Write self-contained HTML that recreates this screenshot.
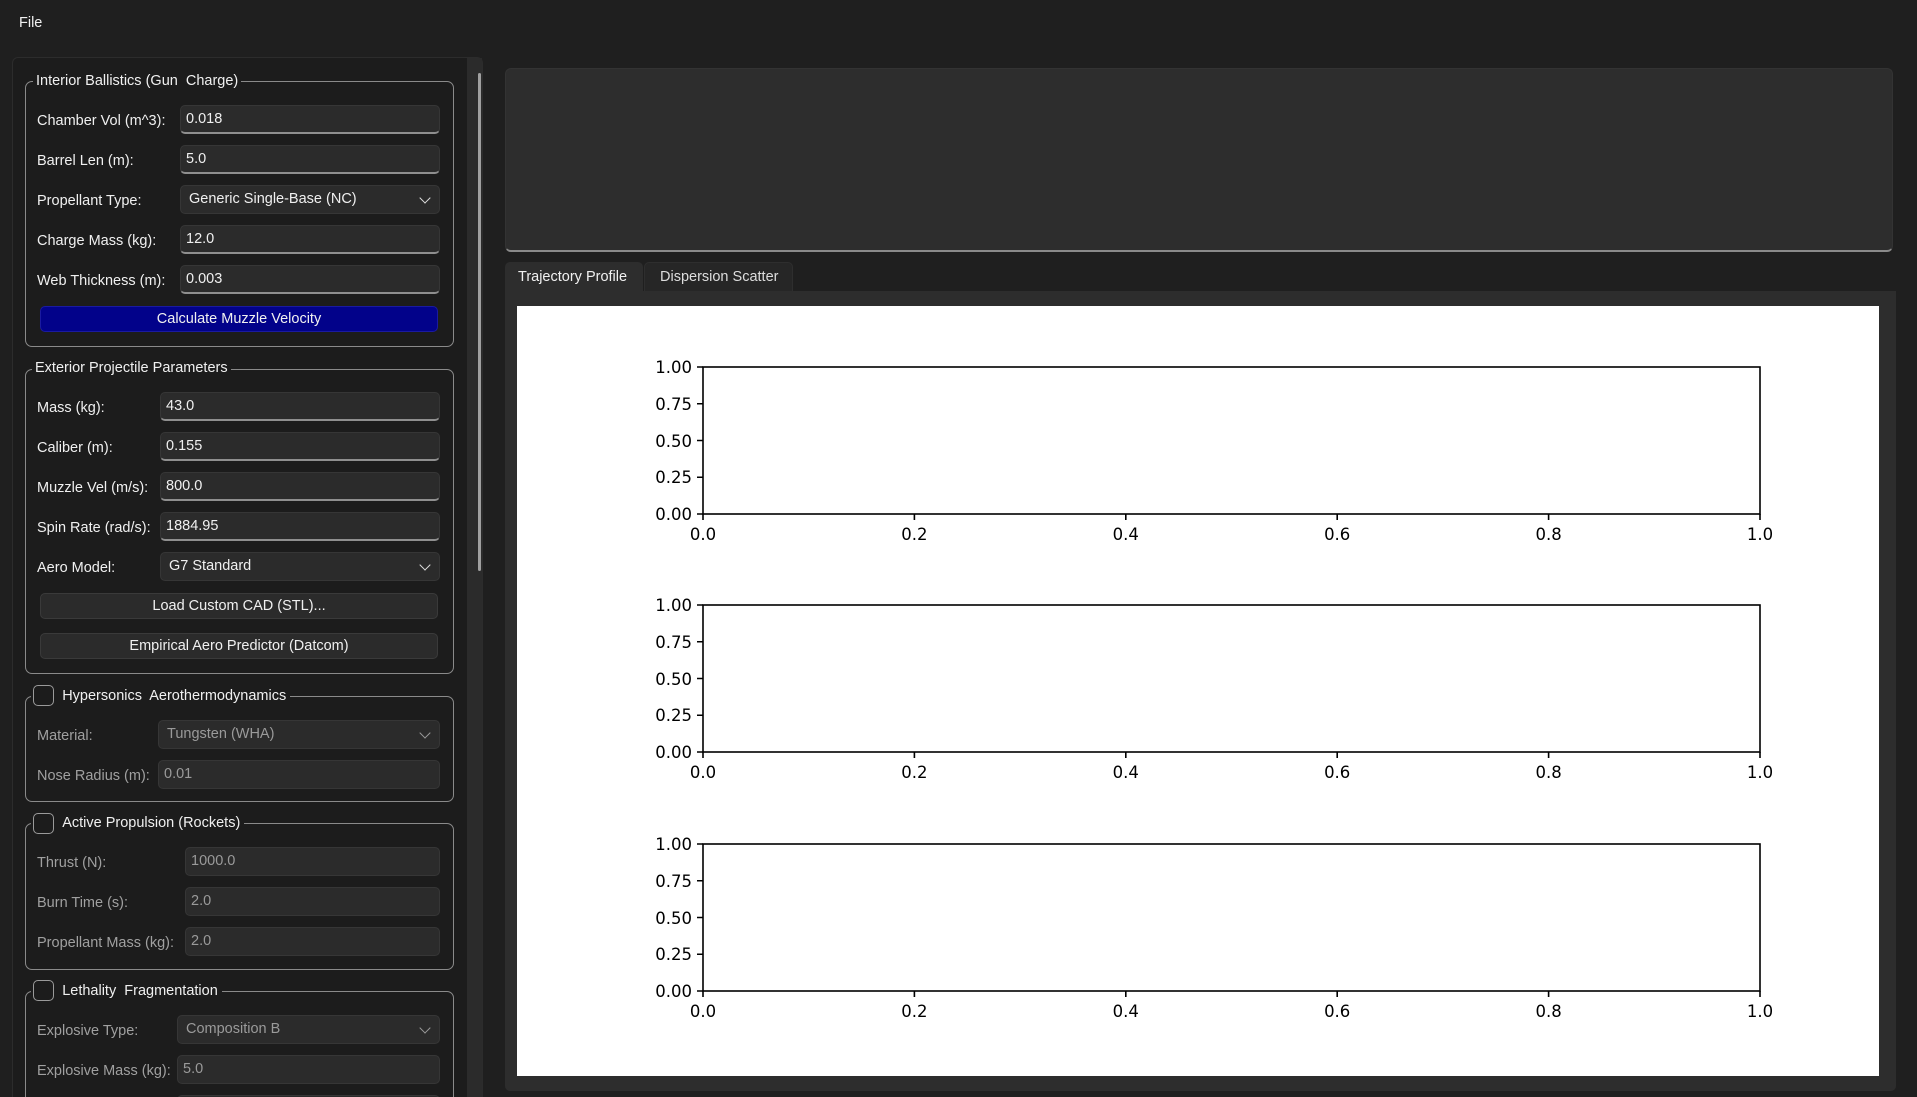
<!DOCTYPE html>
<html style="overflow:hidden;height:1097px"><head><meta charset="utf-8"><style>
*{box-sizing:border-box;margin:0;padding:0}
html,body{width:1917px;height:1097px;overflow:hidden;background:#1f1f1f}
#w{position:relative;width:1917px;height:1097px;overflow:hidden;background:#1f1f1f;font-family:"Liberation Sans",sans-serif;font-size:14.5px;color:#f0f0f0}
.a{position:absolute}
.lp{left:12px;top:57px;width:471px;height:1040px;background:#1c1c1c;border:1px solid #2c2c2c;border-bottom:none;border-radius:6px 6px 0 0;overflow:hidden}
.gb{position:absolute;border:1.5px solid #8a8a8a;border-radius:7px}
.gt{position:absolute;background:#1c1c1c;padding:0 3px;line-height:18px;white-space:nowrap}
.lb{position:absolute;line-height:18px;white-space:nowrap}
.in{position:absolute;height:29px;background:#2b2b2b;border:1px solid #363636;border-bottom:2px solid #8f8f8f;border-radius:5px;padding-left:5px;line-height:27px;white-space:nowrap}
.dis{color:#a0a0a0}
.in.dis{border-bottom:1px solid #363636;color:#9a9a9a}
.cb{position:absolute;width:21px;height:21px;border:1.5px solid #9a9a9a;border-radius:5px;background:#1c1c1c}
.bt{position:absolute;left:40px;width:398px;height:26px;background:#2b2b2b;border:1px solid #3a3a3a;border-radius:5px;text-align:center;line-height:25px}
.chev{position:absolute;right:10px;top:8px;width:8px;height:8px;border-right:1.5px solid #ddd;border-bottom:1.5px solid #ddd;transform:rotate(45deg)}
.in.dis .chev{border-color:#999}
</style></head><body><div id="w">
<div class="a" style="left:19px;top:14px;line-height:18px">File</div>

<div class="a lp"></div>
<div class="a" style="left:467px;top:58px;width:15px;height:1039px;background:#2b2b2b"></div>
<div class="a" style="left:478px;top:73px;width:3px;height:498px;background:#a0a0a0;border-radius:2px"></div>

<!-- G1 -->
<div class="gb" style="left:25px;top:81px;width:429px;height:266px"></div>
<div class="gt" style="left:33px;top:72px">Interior Ballistics (Gun&nbsp; Charge)</div>
<div class="lb" style="left:37px;top:112px">Chamber Vol (m^3):</div><div class="in" style="left:180px;top:105px;width:260px">0.018</div>
<div class="lb" style="left:37px;top:152px">Barrel Len (m):</div><div class="in" style="left:180px;top:145px;width:260px">5.0</div>
<div class="lb" style="left:37px;top:192px">Propellant Type:</div><div class="in" style="left:180px;top:185px;width:260px;border-bottom:1px solid #363636;padding-left:8px">Generic Single-Base (NC)<span class="chev"></span></div>
<div class="lb" style="left:37px;top:232px">Charge Mass (kg):</div><div class="in" style="left:180px;top:225px;width:260px">12.0</div>
<div class="lb" style="left:37px;top:272px">Web Thickness (m):</div><div class="in" style="left:180px;top:265px;width:260px">0.003</div>
<div class="bt" style="top:306px;background:#02028a;border-color:#1a1aa0">Calculate Muzzle Velocity</div>

<!-- G2 -->
<div class="gb" style="left:25px;top:369px;width:429px;height:305px"></div>
<div class="gt" style="left:32px;top:359px">Exterior Projectile Parameters</div>
<div class="lb" style="left:37px;top:399px">Mass (kg):</div><div class="in" style="left:160px;top:392px;width:280px">43.0</div>
<div class="lb" style="left:37px;top:439px">Caliber (m):</div><div class="in" style="left:160px;top:432px;width:280px">0.155</div>
<div class="lb" style="left:37px;top:479px">Muzzle Vel (m/s):</div><div class="in" style="left:160px;top:472px;width:280px">800.0</div>
<div class="lb" style="left:37px;top:519px">Spin Rate (rad/s):</div><div class="in" style="left:160px;top:512px;width:280px">1884.95</div>
<div class="lb" style="left:37px;top:559px">Aero Model:</div><div class="in" style="left:160px;top:552px;width:280px;border-bottom:1px solid #363636;padding-left:8px">G7 Standard<span class="chev"></span></div>
<div class="bt" style="top:593px">Load Custom CAD (STL)...</div>
<div class="bt" style="top:633px">Empirical Aero Predictor (Datcom)</div>

<!-- G3 -->
<div class="gb" style="left:25px;top:696px;width:429px;height:106px"></div>
<div class="gt" style="left:31px;top:687px;padding-right:4px">&nbsp;&nbsp;&nbsp;&nbsp;&nbsp;&nbsp;&nbsp;Hypersonics&nbsp; Aerothermodynamics</div>
<div class="cb" style="left:33px;top:685px"></div>
<div class="lb dis" style="left:37px;top:727px">Material:</div><div class="in dis" style="left:158px;top:720px;width:282px;padding-left:8px">Tungsten (WHA)<span class="chev"></span></div>
<div class="lb dis" style="left:37px;top:767px">Nose Radius (m):</div><div class="in dis" style="left:158px;top:760px;width:282px">0.01</div>

<!-- G4 -->
<div class="gb" style="left:25px;top:823px;width:429px;height:147px"></div>
<div class="gt" style="left:31px;top:814px;padding-right:4px">&nbsp;&nbsp;&nbsp;&nbsp;&nbsp;&nbsp;&nbsp;Active Propulsion (Rockets)</div>
<div class="cb" style="left:33px;top:813px"></div>
<div class="lb dis" style="left:37px;top:854px">Thrust (N):</div><div class="in dis" style="left:185px;top:847px;width:255px">1000.0</div>
<div class="lb dis" style="left:37px;top:894px">Burn Time (s):</div><div class="in dis" style="left:185px;top:887px;width:255px">2.0</div>
<div class="lb dis" style="left:37px;top:934px">Propellant Mass (kg):</div><div class="in dis" style="left:185px;top:927px;width:255px">2.0</div>

<!-- G5 -->
<div class="gb" style="left:25px;top:991px;width:429px;height:150px"></div>
<div class="gt" style="left:31px;top:982px;padding-right:4px">&nbsp;&nbsp;&nbsp;&nbsp;&nbsp;&nbsp;&nbsp;Lethality&nbsp; Fragmentation</div>
<div class="cb" style="left:33px;top:980px"></div>
<div class="lb dis" style="left:37px;top:1022px">Explosive Type:</div><div class="in dis" style="left:177px;top:1015px;width:263px;padding-left:8px">Composition B<span class="chev"></span></div>
<div class="lb dis" style="left:37px;top:1062px">Explosive Mass (kg):</div><div class="in dis" style="left:177px;top:1055px;width:263px">5.0</div>
<div class="in dis" style="left:177px;top:1095px;width:263px"></div>

<!-- right -->
<div class="a" style="left:505px;top:68px;width:1388px;height:184px;background:#2d2d2d;border:1px solid #333;border-bottom:2px solid #8a8a8a;border-radius:6px"></div>
<div class="a" style="left:505px;top:262px;width:138px;height:30px;background:#2d2d2d;border-radius:5px 5px 0 0;line-height:30px;padding-left:13px">Trajectory Profile</div>
<div class="a" style="left:644px;top:262px;width:149px;height:29px;background:#262626;border:1px solid #2e2e2e;border-bottom:none;border-radius:5px 5px 0 0;line-height:28px;padding-left:15px;color:#ddd">Dispersion Scatter</div>
<div class="a" style="left:505px;top:291px;width:1391px;height:800px;background:#2d2d2d;border-radius:0 0 5px 5px"></div>
<div class="a" style="left:517px;top:306px;width:1362px;height:770px;background:#fff"></div>

<svg class="a" style="left:0;top:0" width="1917" height="1097" viewBox="0 0 1917 1097" font-family="DejaVu Sans, sans-serif" font-size="16.5" fill="#000">
<g stroke="#000" stroke-width="1.6" fill="none">
<rect x="703" y="367" width="1057" height="147"/>
<rect x="703" y="605" width="1057" height="147"/>
<rect x="703" y="844" width="1057" height="147"/>
<path d="M697 367h6M697 403.75h6M697 440.5h6M697 477.25h6M697 514h6
M697 605h6M697 641.75h6M697 678.5h6M697 715.25h6M697 752h6
M697 844h6M697 880.75h6M697 917.5h6M697 954.25h6M697 991h6
M703 514v6M914.4 514v6M1125.8 514v6M1337.2 514v6M1548.6 514v6M1760 514v6
M703 752v6M914.4 752v6M1125.8 752v6M1337.2 752v6M1548.6 752v6M1760 752v6
M703 991v6M914.4 991v6M1125.8 991v6M1337.2 991v6M1548.6 991v6M1760 991v6"/>
</g>
<g text-anchor="end">
<text x="692" y="373">1.00</text><text x="692" y="410">0.75</text><text x="692" y="447">0.50</text><text x="692" y="483">0.25</text><text x="692" y="520">0.00</text>
<text x="692" y="611">1.00</text><text x="692" y="648">0.75</text><text x="692" y="685">0.50</text><text x="692" y="721">0.25</text><text x="692" y="758">0.00</text>
<text x="692" y="850">1.00</text><text x="692" y="887">0.75</text><text x="692" y="924">0.50</text><text x="692" y="960">0.25</text><text x="692" y="997">0.00</text>
</g>
<g text-anchor="middle">
<text x="703" y="540">0.0</text><text x="914.4" y="540">0.2</text><text x="1125.8" y="540">0.4</text><text x="1337.2" y="540">0.6</text><text x="1548.6" y="540">0.8</text><text x="1760" y="540">1.0</text>
<text x="703" y="778">0.0</text><text x="914.4" y="778">0.2</text><text x="1125.8" y="778">0.4</text><text x="1337.2" y="778">0.6</text><text x="1548.6" y="778">0.8</text><text x="1760" y="778">1.0</text>
<text x="703" y="1017">0.0</text><text x="914.4" y="1017">0.2</text><text x="1125.8" y="1017">0.4</text><text x="1337.2" y="1017">0.6</text><text x="1548.6" y="1017">0.8</text><text x="1760" y="1017">1.0</text>
</g>
</svg>
</div></body></html>
